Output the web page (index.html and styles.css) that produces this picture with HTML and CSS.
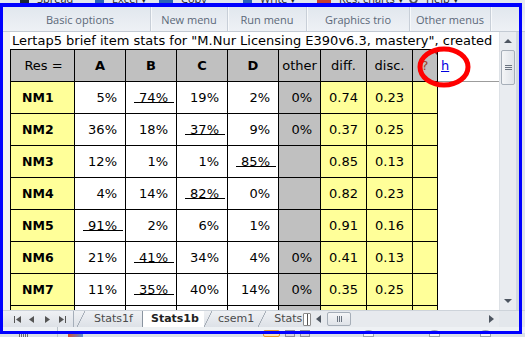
FILE: index.html
```html
<!DOCTYPE html>
<html lang="en">
<head>
  <meta charset="UTF-8" />
  <title>Lertap5 brief item stats</title>
  <link rel="stylesheet" href="styles.css">
</head>
<body>
<div class="window">

  <div class="ribbon-top">
    <span class="rt rt1"><i class="ico dark"></i>Spread</span>
    <span class="rt rt2"><i class="ico blue"></i>Excel ▾</span>
    <span class="rt rt3"><i class="ico blue wide"></i>Copy</span>
    <span class="rt rt4"><i class="ico blue"></i>Write ▾</span>
    <span class="rt rt5"><i class="ico red wide"></i>Res. charts ▾</span>
    <span class="rt rt6"><i class="ico ring-ico"></i>Help ▾</span>
  </div>

  <div class="ribbon-groups">
    <div class="group g1">Basic options</div>
    <div class="group g2">New menu</div>
    <div class="group g3">Run menu</div>
    <div class="group g4">Graphics trio</div>
    <div class="group g5">Other menus</div>
    <div class="group g6"></div>
  </div>

  <div class="sheet">
    <div class="gutter"></div>

    <div class="grid">
      <div class="title">Lertap5 brief item stats for "M.Nur Licensing E390v6.3, mastery", created</div>

      <div class="c h first-h">Res =</div>
      <div class="c h b">A</div>
      <div class="c h b">B</div>
      <div class="c h b">C</div>
      <div class="c h b">D</div>
      <div class="c h">other</div>
      <div class="c h">diff.</div>
      <div class="c h">disc.</div>
      <div class="c h q">?</div>
      <div class="x x-h"><a class="link" href="#">h</a></div>

      <div class="c first y">NM1</div>
      <div class="c w">5%</div>
      <div class="c w"><span class="key">74%</span></div>
      <div class="c w">19%</div>
      <div class="c w">2%</div>
      <div class="c g">0%</div>
      <div class="c y">0.74</div>
      <div class="c y">0.23</div>
      <div class="c y"></div>
      <div class="x"></div>

      <div class="c first y">NM2</div>
      <div class="c w">36%</div>
      <div class="c w">18%</div>
      <div class="c w"><span class="key">37%</span></div>
      <div class="c w">9%</div>
      <div class="c g">0%</div>
      <div class="c y">0.37</div>
      <div class="c y">0.25</div>
      <div class="c y"></div>
      <div class="x"></div>

      <div class="c first y">NM3</div>
      <div class="c w">12%</div>
      <div class="c w">1%</div>
      <div class="c w">1%</div>
      <div class="c w"><span class="key">85%</span></div>
      <div class="c g"></div>
      <div class="c y">0.85</div>
      <div class="c y">0.13</div>
      <div class="c y"></div>
      <div class="x"></div>

      <div class="c first y">NM4</div>
      <div class="c w">4%</div>
      <div class="c w">14%</div>
      <div class="c w"><span class="key">82%</span></div>
      <div class="c w">0%</div>
      <div class="c g"></div>
      <div class="c y">0.82</div>
      <div class="c y">0.23</div>
      <div class="c y"></div>
      <div class="x"></div>

      <div class="c first y">NM5</div>
      <div class="c w"><span class="key">91%</span></div>
      <div class="c w">2%</div>
      <div class="c w">6%</div>
      <div class="c w">1%</div>
      <div class="c g"></div>
      <div class="c y">0.91</div>
      <div class="c y">0.16</div>
      <div class="c y"></div>
      <div class="x"></div>

      <div class="c first y">NM6</div>
      <div class="c w">21%</div>
      <div class="c w"><span class="key">41%</span></div>
      <div class="c w">34%</div>
      <div class="c w">4%</div>
      <div class="c g">0%</div>
      <div class="c y">0.41</div>
      <div class="c y">0.13</div>
      <div class="c y"></div>
      <div class="x"></div>

      <div class="c first y">NM7</div>
      <div class="c w">11%</div>
      <div class="c w"><span class="key">35%</span></div>
      <div class="c w">40%</div>
      <div class="c w">14%</div>
      <div class="c g">0%</div>
      <div class="c y">0.35</div>
      <div class="c y">0.25</div>
      <div class="c y"></div>
      <div class="x"></div>

      <div class="c first y"></div>
      <div class="c w"></div>
      <div class="c w"></div>
      <div class="c w"></div>
      <div class="c w"></div>
      <div class="c g"></div>
      <div class="c y"></div>
      <div class="c y"></div>
      <div class="c y"></div>
      <div class="x"></div>
    </div>

    <div class="vscroll">
      <div class="sb-btn"><span class="tri-up"></span></div>
      <div class="vthumb"><span class="grip-h"></span></div>
      <div class="sb-fill"></div>
      <div class="sb-btn"><span class="tri-down"></span></div>
    </div>
    <div class="edge"></div>
  </div>

  <div class="tabbar">
    <div class="nav">
      <svg width="60" height="17" viewBox="0 0 60 17">
        <g fill="#555">
          <rect x="4" y="5" width="1" height="7"/>
          <path d="M11 5 L6 8.5 L11 12 Z"/>
          <path d="M24 5 L19 8.5 L24 12 Z"/>
          <path d="M35 5 L40 8.5 L35 12 Z"/>
          <path d="M49 5 L54 8.5 L49 12 Z"/>
          <rect x="55" y="5" width="1" height="7"/>
        </g>
      </svg>
    </div>
    <div class="tabs">
      <div class="tab t1">Stats1f</div>
      <div class="tab t2 active">Stats1b</div>
      <div class="tab t3">csem1</div>
      <div class="tab t4">Stats1c</div>
    </div>
    <div class="split"><span></span></div>
    <div class="hscroll">
      <span class="tri-left"></span>
      <div class="hthumb"><span class="grip-v"></span></div>
      <div class="sb-fill"></div>
      <span class="tri-right"></span>
    </div>
    <div class="corner"></div>
  </div>

  <div class="statusbar">
    <span class="st-dots"></span>
    <span class="st-sep"></span>
    <span class="st-ico"></span>
    <span class="st-box"></span>
    <span class="st-sq"></span>
    <span class="st-sq"></span>
    <span class="st-knob k1"></span>
    <span class="st-knob k2"></span>
    <span class="st-knob k3"></span>
  </div>

  <div class="frame"></div>

  <svg class="ring" width="54" height="42" viewBox="0 0 54 42">
    <ellipse cx="27" cy="21" rx="24" ry="18" fill="none" stroke="#f00" stroke-width="5"/>
  </svg>

</div>
</body>
</html>
```

FILE: styles.css
```css
* { margin: 0; padding: 0; box-sizing: border-box; }

body {
  font-family: "DejaVu Sans", Verdana, sans-serif;
  background: #dfe4ea;
}

.window {
  position: relative;
  width: 525px;
  height: 337px;
  overflow: hidden;
  display: flex;
  flex-direction: column;
  background: #dfe4ea;
}

/* ribbon, only the bottom of the buttons shows */
.ribbon-top {
  height: 7px;
  flex: none;
  overflow: hidden;
  display: flex;
  align-items: flex-start;
  padding-left: 20px;
  background: #e4e9ef;
}

.rt {
  display: flex;
  align-items: flex-end;
  gap: 8px;
  height: 11px;
  margin-top: -7px;
  font: 11px/11px "Open Sans", sans-serif;
  color: #222;
  white-space: nowrap;
}

.rt1 { width: 75px; }
.rt2 { width: 64px; }
.rt3 { width: 84px; }
.rt4 { width: 74px; }
.rt5 { width: 92px; }

.ico {
  display: inline-block;
  width: 9px;
  height: 11px;
  border-radius: 1px;
}

.ico.wide { width: 14px; }
.ico.dark { background: #1d2733; }
.ico.blue { background: #2b63b8; }
.ico.red { background: #c8402c; }
.ico.ring-ico { border: 2px solid #555; border-radius: 50%; }

.ribbon-groups {
  height: 25px;
  flex: none;
  display: flex;
  padding-left: 10px;
  background: linear-gradient(#e1e7ee, #eef1f5);
  border-bottom: 1px solid #c3cad3;
}

.group {
  display: flex;
  align-items: center;
  justify-content: center;
  border-right: 1px solid #c8cfd8;
  box-shadow: 1px 0 0 #f7f9fb;
  font: 11px "Open Sans", sans-serif;
  color: #5b6878;
  white-space: nowrap;
}

.g1 { width: 141px; }
.g2 { width: 77px; }
.g3 { width: 79px; }
.g4 { width: 103px; }
.g5 { width: 81px; }
.g6 { flex: 1; border-right: none; box-shadow: none; }

/* worksheet */
.sheet {
  height: 278px;
  flex: none;
  display: flex;
}

.gutter {
  width: 10px;
  background: #f1f1f1;
}

.grid {
  width: 489px;
  display: grid;
  grid-template-columns: 65px 51px 51px 51px 51px 42px 46px 46px 25px 61px;
  grid-template-rows: 17px 33px;
  grid-auto-rows: 32px;
  align-content: start;
  overflow: hidden;
  background: #fff;
  font-size: 13px;
  color: #000;
}

.title {
  grid-column: 1 / -1;
  padding-left: 2px;
  line-height: 17px;
  white-space: nowrap;
  overflow: hidden;
}

.c {
  display: flex;
  align-items: center;
  justify-content: flex-end;
  padding-right: 8px;
  border-right: 1px solid #000;
  border-bottom: 1px solid #000;
}

.h {
  justify-content: center;
  padding-right: 0;
  border-top: 1px solid #000;
  background: #c0c0c0;
}

.first-h { border-left: 1px solid #000; padding-left: 2px; }
.b { font-weight: bold; }

.q {
  position: relative;
  color: #a0402a;
}

.q::after {
  content: "";
  position: absolute;
  top: 0;
  right: 0;
  border-top: 5px solid #8a2c2c;
  border-left: 5px solid transparent;
}

.first {
  justify-content: flex-start;
  padding-left: 11px;
  border-left: 1px solid #000;
  font-weight: bold;
  font-size: 12.5px;
}

.y { background: #ffff99; }
.g { background: #c0c0c0; }
.w { background: #fff; }

.key {
  padding: 0 6px 0 5px;
  margin-right: -6px;
  background: linear-gradient(#000, #000) left calc(100% - 2px) / 100% 1px no-repeat;
}

.x { background: #fff; }

.x-h {
  display: flex;
  align-items: center;
  padding-left: 3px;
  border-bottom: 1px solid #9c9c9c;
}

.link {
  color: #0000e0;
  text-decoration: underline;
}

/* vertical scroll bar */
.vscroll {
  width: 17px;
  display: flex;
  flex-direction: column;
  background: #e9ecf0;
  border-left: 1px solid #dde1e6;
}

.sb-btn {
  height: 18px;
  display: flex;
  align-items: center;
  justify-content: center;
}

.sb-fill { flex: 1; }

.tri-up {
  border-bottom: 4px solid #4d5560;
  border-left: 4px solid transparent;
  border-right: 4px solid transparent;
}

.tri-down {
  border-top: 4px solid #4d5560;
  border-left: 4px solid transparent;
  border-right: 4px solid transparent;
}

.vthumb {
  height: 35px;
  margin: 0 1px;
  display: flex;
  align-items: center;
  justify-content: center;
  border: 1px solid #a6aeb8;
  border-radius: 2px;
  background: linear-gradient(90deg, #f4f5f7, #dfe3e8);
}

.grip-h {
  width: 7px;
  height: 5px;
  border-top: 1px solid #6b7480;
  border-bottom: 1px solid #6b7480;
  background: linear-gradient(#6b7480, #6b7480) center / 100% 1px no-repeat;
}

.edge {
  width: 6px;
  background: #d3d9e1;
}

/* sheet tabs */
.tabbar {
  height: 17px;
  flex: none;
  display: flex;
  background: linear-gradient(#eff1f4, #dde1e7);
  border-top: 1px solid #cdd3da;
}

.nav {
  width: 73px;
  padding-left: 10px;
}

.tabs {
  width: 230px;
  display: flex;
  overflow: hidden;
  border-left: 1px solid #a5aeb9;
  font-size: 11px;
  line-height: 16px;
  color: #4b4b4b;
  white-space: nowrap;
}

.tab {
  position: relative;
  flex: none;
}

.tab::before {
  content: "";
  position: absolute;
  left: 0;
  top: 0;
  width: 8px;
  height: 16px;
  background: linear-gradient(to bottom right, transparent calc(50% - 0.7px), #8a94a0 50%, transparent calc(50% + 0.7px));
}

.t1 { padding: 0 9px 0 20px; border-right: 1px solid #8a94a0; }
.t1::before { left: 3px; }
.t2 { padding: 0 5px 0 8px; }
.t2::before { display: none; }
.t3 { padding: 0 4px 0 14px; }
.t4 { padding: 0 0 0 16px; }

.active {
  background: #fff;
  font-weight: bold;
  color: #222;
}

.split {
  width: 8px;
  display: flex;
  align-items: center;
}

.split span {
  width: 8px;
  height: 13px;
  border: 1px solid #8b8b8b;
  border-radius: 1px;
  background: linear-gradient(90deg, #fff 3px, #555 3px, #555 4px, #fff 4px);
}

.hscroll {
  width: 188px;
  display: flex;
  align-items: center;
  padding: 0 5px;
  background: #e7eaee;
}

.tri-left {
  border-right: 5px solid #4d5560;
  border-top: 4px solid transparent;
  border-bottom: 4px solid transparent;
}

.tri-right {
  border-left: 5px solid #4d5560;
  border-top: 4px solid transparent;
  border-bottom: 4px solid transparent;
}

.hthumb {
  width: 24px;
  height: 14px;
  margin-left: 6px;
  display: flex;
  align-items: center;
  justify-content: center;
  border: 1px solid #a6aeb8;
  border-radius: 2px;
  background: linear-gradient(#f4f5f7, #dfe3e8);
}

.grip-v {
  width: 5px;
  height: 6px;
  border-left: 1px solid #6b7480;
  border-right: 1px solid #6b7480;
  background: linear-gradient(#6b7480, #6b7480) center / 1px 100% no-repeat;
}

.corner {
  flex: 1;
  background: #e3e7ec;
}

/* status bar, mostly hidden below the frame */
.statusbar {
  flex: 1;
  display: flex;
  align-items: stretch;
  background: linear-gradient(#eef1f4 60%, #dbe1e8 60%);
}

.st-dots {
  width: 9px;
  margin: 7px 0 0 19px;
  background: repeating-linear-gradient(90deg, #6d6d6d 0 1px, transparent 1px 2px);
}

.st-sep {
  width: 1px;
  margin-left: 29px;
  background: #b8c0c9;
}

.st-ico {
  width: 15px;
  margin: 7px 0 0 10px;
  background: linear-gradient(90deg, #d2533a, #5b8fd4);
}

.st-box {
  width: 17px;
  margin: 3px 0 0 180px;
  border: 1px solid #e39a2e;
  border-radius: 2px;
  background: #fbe3b5;
}

.st-sq {
  width: 10px;
  margin: 3px 0 0 5px;
  border: 1px solid #8d8d9a;
  background: #d8d3e0;
}

.st-knob {
  width: 11px;
  margin-top: 3px;
  border: 1px solid #9aa3ad;
  border-radius: 50% 50% 0 0;
  background: #f4f5f7;
}

.k1 { margin-left: 53px; }
.k2 { margin-left: 55px; }
.k3 { margin-left: 40px; }

/* blue annotation frame and red circle drawn on top */
.frame {
  position: absolute;
  left: 0;
  top: 3px;
  width: 522px;
  height: 331px;
  border: 3px solid #0000ff;
  border-top-width: 4px;
  pointer-events: none;
}

.ring {
  position: absolute;
  left: 417px;
  top: 46px;
}
```
